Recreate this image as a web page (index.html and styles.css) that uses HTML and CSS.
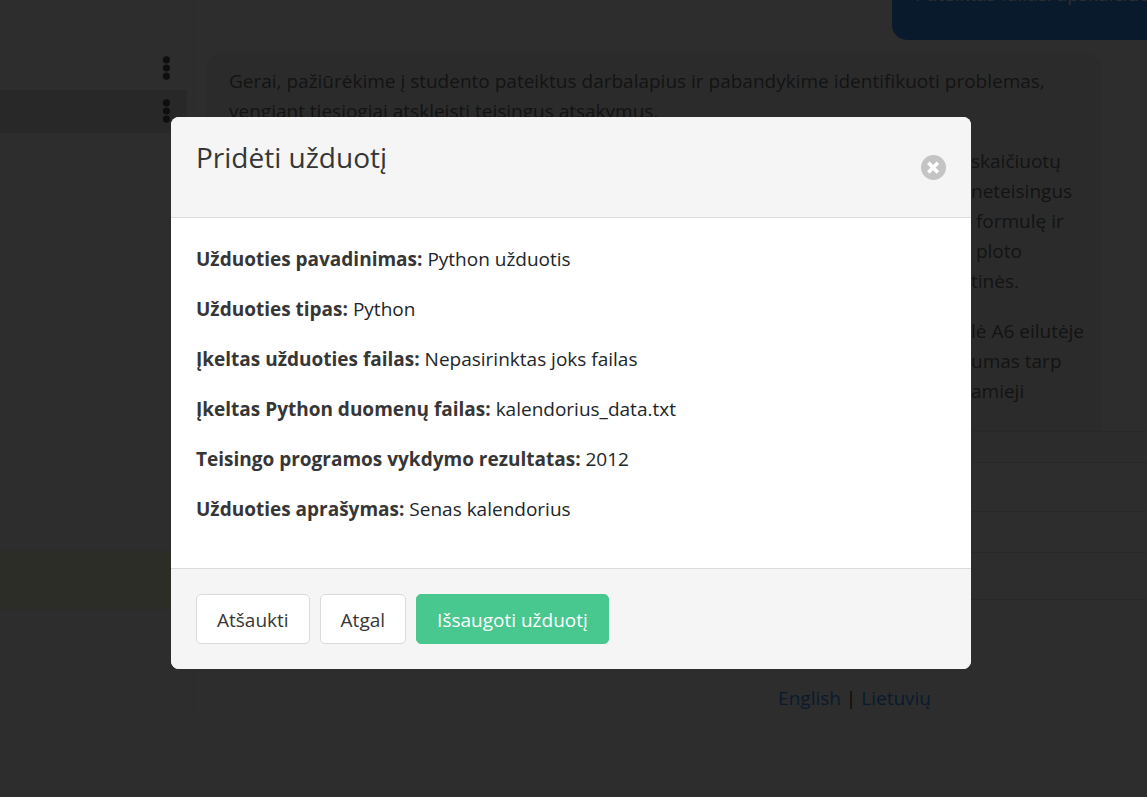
FILE: index.html
```html
<!DOCTYPE html>
<html lang="lt">
<head>
<meta charset="utf-8">
<title>Pridėti užduotį</title>
<link rel="stylesheet" href="styles.css">
</head>
<body>
<div class="app">
  <aside class="sidebar">
    <div class="row"><button class="kebab" type="button" aria-label="Meniu"><svg width="8" height="24" viewBox="0 0 8 24"><circle cx="4.4" cy="3.8" r="3.6"/><circle cx="4.4" cy="12" r="3.6"/><circle cx="4.4" cy="20.2" r="3.6"/></svg></button></div>
    <div class="row row-active"><button class="kebab" type="button" aria-label="Meniu"><svg width="8" height="24" viewBox="0 0 8 24"><circle cx="4.4" cy="3.8" r="3.6"/><circle cx="4.4" cy="12" r="3.6"/><circle cx="4.4" cy="20.2" r="3.6"/></svg></button></div>
    <div class="space"></div>
    <div class="notice"></div>
  </aside>
  <main class="main">
    <section class="chat">
      <div class="bubble bubble-user">Pateiktas failas: apskaičiuotas</div>
      <div class="bubble bubble-bot">
        <p>Gerai, pažiūrėkime į studento pateiktus darbalapius ir pabandykime identifikuoti problemas,<br>vengiant tiesiogiai atskleisti teisingus atsakymus.</p>
        <p class="tail">skaičiuotų<br>neteisingus<br>&nbsp;formulę ir<br>&nbsp;ploto<br>tinės.</p>
        <p class="tail">lė A6 eilutėje<br>umas tarp<br>amieji</p>
      </div>
    </section>
    <div class="bar bar-tint"></div>
    <div class="bar bar-tall"></div>
    <div class="bar bar-short"></div>
    <div class="bar bar-last"></div>
    <footer class="langs"><a href="#en">English</a> | <a href="#lt">Lietuvių</a></footer>
  </main>
</div>
<div class="overlay">
  <div class="modal" role="dialog" aria-modal="true" aria-labelledby="title">
    <header class="modal-head">
      <h1 class="modal-title" id="title">Pridėti užduotį</h1>
      <button class="close" type="button" aria-label="Uždaryti"><svg width="25" height="25" viewBox="0 0 25 25"><path d="M7.3 7.8l9.6 9.6M16.9 7.8l-9.6 9.6"/></svg></button>
    </header>
    <div class="modal-body">
      <p><strong>Užduoties pavadinimas:</strong> Python užduotis</p>
      <p><strong>Užduoties tipas:</strong> Python</p>
      <p><strong>Įkeltas užduoties failas:</strong> Nepasirinktas joks failas</p>
      <p><strong>Įkeltas Python duomenų failas:</strong> kalendorius_data.txt</p>
      <p><strong>Teisingo programos vykdymo rezultatas:</strong> 2012</p>
      <p><strong>Užduoties aprašymas:</strong> Senas kalendorius</p>
    </div>
    <footer class="modal-foot">
      <button class="button" type="button">Atšaukti</button>
      <button class="button" type="button">Atgal</button>
      <button class="button button-success" type="button">Išsaugoti užduotį</button>
    </footer>
  </div>
</div>
</body>
</html>
```
FILE: styles.css
```css
* { box-sizing: border-box; }
body {
  margin: 0;
  min-height: 100vh;
  overflow: hidden;
  background: #fff;
  color: #212529;
  font: 19px/30px "Segoe UI", "Open Sans", "Noto Sans", sans-serif;
}
p, h1 { margin: 0; }
button { font: inherit; cursor: pointer; }

.app { display: flex; align-items: flex-start; }
.sidebar {
  flex: 0 0 194px;
  display: flex;
  flex-direction: column;
  height: 715px;
  padding-top: 47px;
  border-right: 2px solid #f5f5f5;
}
.row {
  display: flex;
  align-items: center;
  justify-content: flex-end;
  height: 43px;
  margin-right: 5px;
  padding: 0 17px 2px 0;
}
.row-active { background: #dcdcdc; }
.kebab { display: flex; padding: 0; border: 0; background: none; }
.kebab svg { fill: #212529; }
.space { flex: 0 0 418px; }
.notice { height: 58px; background: #fafad2; box-shadow: 0 0 8px #e4e4e4; }

.main { flex: 1; min-width: 0; }
.chat {
  display: flex;
  flex-direction: column;
  justify-content: flex-end;
  gap: 13px;
  height: 431px;
  padding: 0 12px;
  overflow: hidden;
}
.bubble { flex: none; border-radius: 15px; padding: 13px 23px; }
.bubble-user {
  width: 300px;
  margin-left: auto;
  margin-right: -57px;
  padding-bottom: 31px;
  white-space: nowrap;
  background: #007bff;
  color: #fff;
}
.bubble-bot {
  margin-right: 34px;
  padding-bottom: 25px;
  border-radius: 15px 15px 0 0;
  background: #f1f1f1;
  color: #4a4a4a;
  white-space: nowrap;
}
.bubble p + p { margin-top: 20px; }
.tail { padding-left: 742px; }
.bar { border-top: 1px solid #dbdbdb; }
.bar-tint { height: 31px; background: #f5f5f5; }
.bar-tall { height: 49px; }
.bar-short { height: 41px; }
.bar-last { height: 48px; border-bottom: 1px solid #dbdbdb; }
.langs { padding-top: 83px; padding-right: 216px; text-align: right; color: #000; }
.langs a { color: #007bff; text-decoration: none; }

.overlay {
  position: fixed;
  inset: 0;
  display: flex;
  align-items: center;
  justify-content: center;
  padding: 0 5px 11px 0;
  background: rgba(10, 10, 10, 0.86);
}
.modal {
  width: 800px;
  max-width: 100%;
  border-radius: 8px;
  overflow: hidden;
  background: #fff;
}
.modal-head {
  display: flex;
  align-items: center;
  justify-content: space-between;
  padding: 25px;
  border-bottom: 1px solid #dbdbdb;
  background: #f5f5f5;
}
.modal-title {
  margin-bottom: 20px;
  color: #363636;
  font-size: 28px;
  font-weight: 400;
  line-height: 30px;
}
.close {
  display: flex;
  padding: 0;
  border: 0;
  border-radius: 50%;
  background: #c4c4c4;
}
.close svg { fill: none; stroke: #fff; stroke-width: 3.6; }
.modal-body { padding: 26px 25px 24px; }
.modal-body p { margin-bottom: 20px; }
.modal-body strong { color: #363636; font-weight: 700; }
.modal-foot {
  display: flex;
  gap: 10px;
  padding: 25px;
  border-top: 1px solid #dbdbdb;
  background: #f5f5f5;
}
.button {
  height: 50px;
  padding: 1px 20px 0;
  border: 1px solid #dbdbdb;
  border-radius: 5px;
  background: #fff;
  color: #363636;
}
.button-success { border-color: #48c78e; background: #48c78e; color: #fff; }
```
